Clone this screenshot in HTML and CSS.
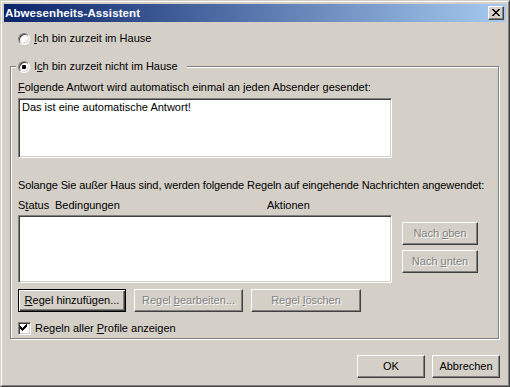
FILE: index.html
```html
<!DOCTYPE html>
<html>
<head>
<meta charset="utf-8">
<link rel="stylesheet" href="styles.css">
</head>
<body>
<div class="window">
  <div class="frame">
    <div class="titlebar">
      <span class="title">Abwesenheits-Assistent</span>
      <span class="close">
        <svg width="14" height="12" viewBox="0 0 14 12" shape-rendering="crispEdges">
          <path fill="#000" d="M3 2h2v1H3zM9 2h2v1H9zM4 3h2v1H4zM8 3h2v1H8zM5 4h4v1H5zM6 5h2v1H6zM5 6h4v1H5zM4 7h2v1H4zM8 7h2v1H8zM3 8h2v1H3zM9 8h2v1H9z"/>
        </svg>
      </span>
    </div>
    <div class="content">
      <div class="option first">
        <span class="radio"></span>
        <span><u>I</u>ch bin zurzeit im Hause</span>
      </div>
      <div class="group">
        <div class="legend option">
          <span class="radio checked"></span>
          <span>I<u>c</u>h bin zurzeit nicht im Hause</span>
        </div>
        <div class="label reply-label"><u>F</u>olgende Antwort wird automatisch einmal an jeden Absender gesendet:</div>
        <div class="sunken reply">Das ist eine automatische Antwort!</div>
        <div class="label rules-label">Solange Sie außer Haus sind, werden folgende Regeln auf eingehende Nachrichten angewendet:</div>
        <div class="columns">
          <span>S<u>t</u>atus</span>
          <span>Bedingungen</span>
          <span>Aktionen</span>
        </div>
        <div class="rules-row">
          <div class="sunken rules"></div>
          <div class="side-buttons">
            <span class="btn disabled side"><span>Nach <u>o</u>ben</span></span>
            <span class="btn disabled side"><span>Nach <u>u</u>nten</span></span>
          </div>
        </div>
        <div class="rule-buttons">
          <span class="btn default w-add"><span><u>R</u>egel hinzufügen...</span></span>
          <span class="btn disabled w-edit"><span>Regel <u>b</u>earbeiten...</span></span>
          <span class="btn disabled w-del"><span>Regel <u>l</u>öschen</span></span>
        </div>
        <div class="option check-row">
          <span class="checkbox">
            <svg width="11" height="11" viewBox="0 0 11 11" shape-rendering="crispEdges">
              <path fill="#000" d="M7 1h1v1H7zM6 2h2v1H6zM1 3h1v1H1zM5 3h3v1H5zM1 4h2v1H1zM4 4h3v1H4zM1 5h5v1H1zM2 6h3v1H2zM3 7h1v1H3z"/>
            </svg>
          </span>
          <span>Regeln aller <u>P</u>rofile anzeigen</span>
        </div>
      </div>
      <div class="dialog-buttons">
        <span class="btn w-dlg"><span>OK</span></span>
        <span class="btn w-dlg"><span>Abbrechen</span></span>
      </div>
    </div>
  </div>
</div>
</body>
</html>
```

FILE: styles.css
```css
html, body {
  margin: 0;
  padding: 0;
  background: #D4D0C8;
}

.window {
  width: 510px;
  height: 387px;
  box-sizing: border-box;
  background: #D4D0C8;
  border: 1px solid;
  border-color: #D4D0C8 #404040 #404040 #D4D0C8;
  font-family: "Liberation Sans", Arial, sans-serif;
  font-size: 11px;
  line-height: 13px;
  color: #000;
}

.frame {
  height: 100%;
  box-sizing: border-box;
  border: 1px solid;
  border-color: #fff #808080 #808080 #fff;
  padding: 2px;
  display: flex;
  flex-direction: column;
}

.titlebar {
  height: 18px;
  flex: none;
  background: linear-gradient(90deg, #0A246A 0%, #A6CAF0 100%);
  display: flex;
  align-items: center;
  justify-content: space-between;
  padding: 0 2px 0 1px;
}

.title {
  color: #fff;
  font-weight: bold;
  font-size: 11.5px;
  letter-spacing: 0.1px;
}

.close {
  width: 16px;
  height: 14px;
  box-sizing: border-box;
  background: #D4D0C8;
  border: 1px solid;
  border-color: #fff #404040 #404040 #fff;
  box-shadow: inset -1px -1px 0 #808080;
  display: flex;
}

.close svg {
  display: block;
}

.content {
  flex: 1;
  display: flex;
  flex-direction: column;
  padding: 0 6px 0 6px;
}

.option {
  display: flex;
  align-items: center;
  gap: 4px;
  height: 13px;
}

.option.first {
  margin-top: 10px;
  padding-left: 8px;
}

.radio {
  width: 12px;
  height: 12px;
  box-sizing: border-box;
  border-radius: 50%;
  border: 1px solid;
  border-color: #808080 #fff #fff #808080;
  background: #fff;
  box-shadow: inset 1px 1px 0 #404040, inset -1px -1px 0 #D4D0C8;
  flex: none;
  display: flex;
  align-items: center;
  justify-content: center;
}

.radio.checked::after {
  content: "";
  width: 4px;
  height: 4px;
  border-radius: 1px;
  background: #000;
}

.group {
  margin-top: 21px;
  border: 1px solid #808080;
  box-shadow: 1px 1px 0 #fff, inset 1px 1px 0 #fff;
  padding: 0 0 1px 7px;
  display: flex;
  flex-direction: column;
  margin-right: 1px;
}

.legend {
  margin-top: -7px;
  margin-left: -2px;
  padding: 0 9px 0 2px;
  background: #D4D0C8;
  align-self: flex-start;
}

.label {
  white-space: nowrap;
}

.reply-label {
  margin-top: 8px;
}

.sunken {
  box-sizing: border-box;
  width: 374px;
  background: #fff;
  border: 1px solid;
  border-color: #808080 #fff #fff #808080;
  box-shadow: inset 1px 1px 0 #404040, inset -1px -1px 0 #D4D0C8;
}

.reply {
  margin-top: 4px;
  height: 60px;
  padding: 2px 3px;
}

.rules-label {
  margin-top: 21px;
  letter-spacing: -0.1px;
}

.columns {
  margin-top: 7px;
  display: grid;
  grid-template-columns: 37px 212px auto;
}

.rules-row {
  margin-top: 3px;
  display: flex;
  gap: 10px;
}

.rules {
  height: 68px;
}

.side-buttons {
  display: flex;
  flex-direction: column;
  gap: 5px;
  padding-top: 7px;
}

.btn {
  box-sizing: border-box;
  height: 23px;
  display: flex;
  align-items: center;
  justify-content: center;
  border: 1px solid;
  border-color: #fff #404040 #404040 #fff;
  box-shadow: inset -1px -1px 0 #808080;
  background: #D4D0C8;
  white-space: nowrap;
}

.btn.disabled {
  color: #808080;
  text-shadow: 1px 1px 0 #fff;
}

.btn.default {
  border: 1px solid #000;
  box-shadow: inset 1px 1px 0 #fff, inset -1px -1px 0 #404040, inset -2px -2px 0 #808080;
}

.side {
  width: 76px;
}

.rule-buttons {
  margin-top: 6px;
  display: flex;
  gap: 8px;
}

.w-add { width: 108px; }
.w-edit { width: 109px; }
.w-del { width: 110px; }

.check-row {
  margin-top: 10px;
  margin-bottom: 2px;
}

.checkbox {
  width: 13px;
  height: 13px;
  box-sizing: border-box;
  background: #fff;
  border: 1px solid;
  border-color: #808080 #fff #fff #808080;
  box-shadow: inset 1px 1px 0 #404040, inset -1px -1px 0 #D4D0C8;
  flex: none;
}

.checkbox svg {
  display: block;
}

.dialog-buttons {
  margin-top: 16px;
  display: flex;
  justify-content: flex-end;
  gap: 7px;
}

.w-dlg { width: 68px; }
```
